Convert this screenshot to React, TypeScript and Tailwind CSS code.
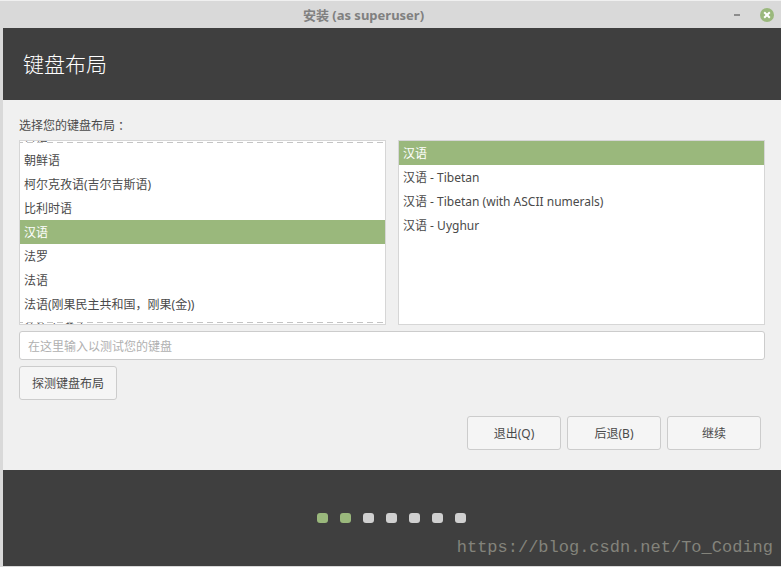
import { useLayoutEffect, useRef, useState } from "react";

const languages = [
  "日语",
  "朝鲜语",
  "柯尔克孜语(吉尔吉斯语)",
  "比利时语",
  "汉语",
  "法罗",
  "法语",
  "法语(刚果民主共和国，刚果(金))",
  "法语(加拿大)",
];

const variants = [
  "汉语",
  "汉语 - Tibetan",
  "汉语 - Tibetan (with ASCII numerals)",
  "汉语 - Uyghur",
];

const steps = [true, true, false, false, false, false, false];

function ListBox({ label, items, initial, scroll = 0 }: { label: string; items: string[]; initial: string; scroll?: number }) {
  const [selected, setSelected] = useState(initial);
  const ref = useRef<HTMLUListElement>(null);

  useLayoutEffect(() => {
    if (ref.current) ref.current.scrollTop = scroll;
  }, [scroll]);

  return (
    <div className="relative min-w-0 flex-1 border border-[#d6d6d6] bg-white">
      <ul ref={ref} role="listbox" aria-label={label} className="h-[183px] overflow-y-auto [scrollbar-width:none]">
        {items.map((item) => (
          <li
            key={item}
            role="option"
            tabIndex={0}
            aria-selected={item === selected}
            onClick={() => setSelected(item)}
            className={
              item === selected
                ? "h-6 truncate bg-[#9ab87c] px-1 leading-[26px] text-white"
                : "h-6 truncate px-1 leading-[26px]"
            }
          >
            {item}
          </li>
        ))}
      </ul>
      {scroll > 0 && (
        <>
          <div className="absolute inset-x-0 top-px h-px bg-[repeating-linear-gradient(90deg,#c4c4c4_0px,#c4c4c4_3px,#ffffff_3px,#ffffff_7px,#c4c4c4_7px,#c4c4c4_10px)]" />
          <div className="absolute inset-x-0 bottom-px h-px bg-[repeating-linear-gradient(90deg,#c4c4c4_0px,#c4c4c4_3px,#ffffff_3px,#ffffff_7px,#c4c4c4_7px,#c4c4c4_10px)]" />
        </>
      )}
    </div>
  );
}

function Button({ children, wide = false }: { children: string; wide?: boolean }) {
  return (
    <button
      type="button"
      className={
        wide
          ? "h-[34px] w-[98px] rounded-[3px] border border-[#cccccc] bg-[#f5f5f5] pt-[2px]"
          : "h-[34px] w-[94px] rounded-[3px] border border-[#cccccc] bg-[#f5f5f5] pt-[2px]"
      }
    >
      {children}
    </button>
  );
}

export default function App() {
  return (
    <div className="flex min-h-screen flex-col border-b border-[#d9d9d9] bg-[#d9d9d9] font-['Noto_Sans','Noto_Sans_CJK_SC',sans-serif] text-xs text-[#4a4a4a]">
      <header className="grid h-7 grid-cols-[1fr_auto_1fr] items-center border-t border-[#f0f0f0] pr-[7px] pl-[3px]">
        <span />
        <h1 className="pr-[50px] text-[13px] leading-5 font-bold text-[#808080]">安装 (as superuser)</h1>
        <div className="flex items-center justify-end gap-4">
          <button type="button" aria-label="Minimize" className="flex h-[14px] w-[14px] items-center justify-center">
            <span className="h-[2px] w-[6px] bg-[#8c8c8c]" />
          </button>
          <button type="button" aria-label="Close" className="h-[14px] w-[14px] rounded-full bg-[#9ab87c]">
            <svg viewBox="0 0 14 14" className="h-[14px] w-[14px]" stroke="#ffffff" strokeWidth="2">
              <path d="M4.2 4.2 9.8 9.8M9.8 4.2 4.2 9.8" />
            </svg>
          </button>
        </div>
      </header>

      <div className="ml-[3px] flex flex-1 flex-col bg-[#f0f0f0]">
        <div className="flex h-[72px] items-center bg-[#3f3f3f] px-5">
          <h2 className="text-[21px] leading-8 font-light text-white">键盘布局</h2>
        </div>

        <main className="flex flex-col px-4 pt-4 pb-5">
          <p className="mb-1 flex leading-5">
            <span>选择您的键盘布局</span>
            <span lang="zh-TW" className="font-['Noto_Sans_CJK_TC',sans-serif]">：</span>
          </p>
          <div className="flex gap-3">
            <ListBox label="键盘布局" items={languages} initial="汉语" scroll={17} />
            <ListBox label="布局变体" items={variants} initial="汉语" />
          </div>
          <input
            type="text"
            aria-label="在这里输入以测试您的键盘"
            placeholder="在这里输入以测试您的键盘"
            className="mt-[6px] h-[29px] w-full rounded-[3px] border border-[#cccccc] bg-white px-2 pt-[2px] placeholder:text-[#b0b0b0]"
          />
          <div className="mt-[6px]">
            <Button wide>探测键盘布局</Button>
          </div>
          <div className="mt-4 flex justify-end gap-[6px] pr-1">
            <Button>退出(Q)</Button>
            <Button>后退(B)</Button>
            <Button>继续</Button>
          </div>
        </main>

        <footer className="relative flex flex-1 justify-center bg-[#3f3f3f] pt-[43px] pr-[2px]">
          <div className="flex gap-3">
            {steps.map((done, i) => (
              <span
                key={i}
                className={
                  done
                    ? "h-[10px] w-[11px] rounded-[3px] bg-[#9ab87c]"
                    : "h-[10px] w-[11px] rounded-[3px] bg-[#d0d0d0]"
                }
              />
            ))}
          </div>
          <span className="absolute right-2 bottom-2 font-['Liberation_Mono',monospace] text-[17px] leading-5 text-[#83837b]">
            https://blog.csdn.net/To_Coding
          </span>
        </footer>
      </div>
    </div>
  );
}
